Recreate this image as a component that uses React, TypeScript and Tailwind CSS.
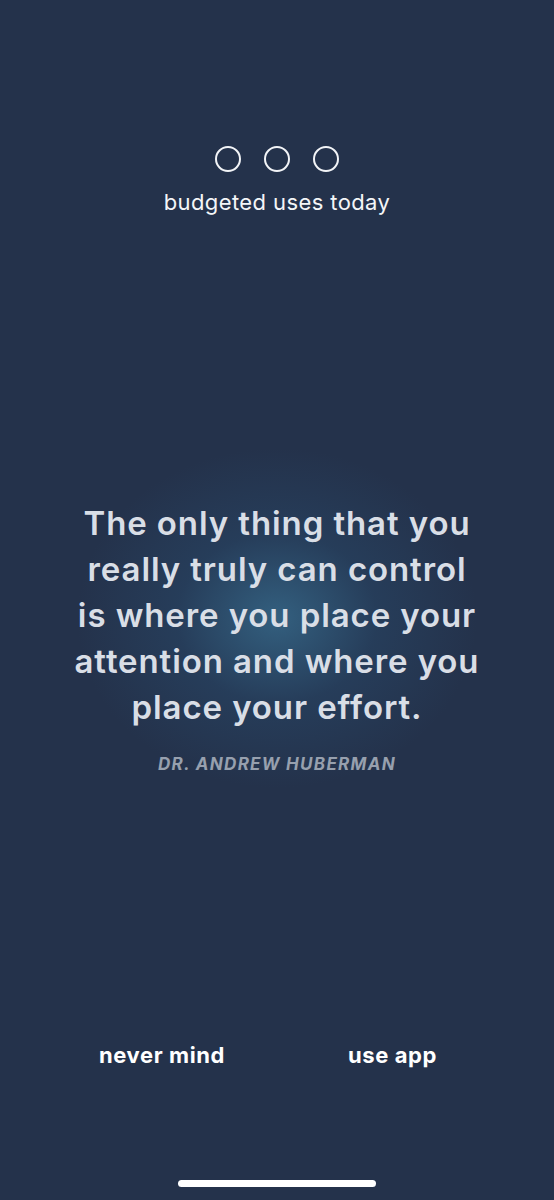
import React from "react";

export default function App() {
  return (
    <div
      className="relative w-full h-[1200px] overflow-hidden bg-[#24324b] flex flex-col items-center"
      style={{ fontFamily: "Inter, 'Noto Sans', sans-serif" }}
    >
      <div className="absolute left-1/2 top-[618px] -translate-x-1/2 -translate-y-1/2 w-[400px] h-[340px] rounded-full bg-[radial-gradient(closest-side,rgba(52,98,130,0.95),rgba(40,70,102,0.55)_50%,rgba(36,50,75,0)_100%)]" />
      <div className="relative flex gap-[23px] mt-[146px]">
        <div className="w-[26px] h-[26px] rounded-full border-2 border-[#f2f4f7]" />
        <div className="w-[26px] h-[26px] rounded-full border-2 border-[#f2f4f7]" />
        <div className="w-[26px] h-[26px] rounded-full border-2 border-[#f2f4f7]" />
      </div>
      <div className="relative mt-[17px] text-[22px] leading-[26px] text-[#f4f6f8] tracking-[0.4px]">
        budgeted uses today
      </div>
      <div className="relative mt-[285px] text-center text-[33px] leading-[46px] font-semibold text-[#d9dee6] tracking-[0.9px]">
        The only thing that you
        <br />
        really truly can control
        <br />
        is where you place your
        <br />
        attention and where you
        <br />
        place your effort.
      </div>
      <div className="relative mt-[23px] text-[17px] leading-[22px] font-bold italic text-[#97a0ae] tracking-[1.3px]">
        DR. ANDREW HUBERMAN
      </div>
      <div className="flex-1" />
      <div className="relative w-full flex justify-between pl-[99px] pr-[117px] text-[22px] leading-[26px] font-bold text-white tracking-[0.6px]">
        <span>never mind</span>
        <span>use app</span>
      </div>
      <div className="relative mt-[112px] mb-[13px] w-[198px] h-[7px] rounded-full bg-white" />
    </div>
  );
}
